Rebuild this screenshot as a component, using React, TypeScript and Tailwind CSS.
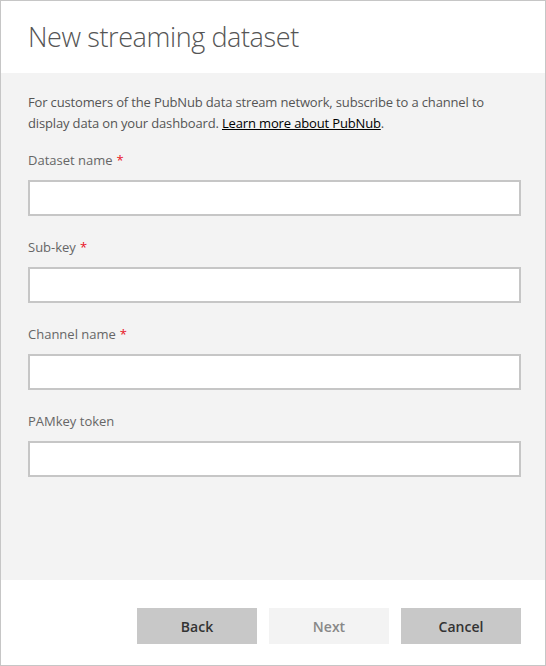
const fields = [
  { label: "Dataset name", required: true },
  { label: "Sub-key", required: true },
  { label: "Channel name", required: true },
  { label: "PAMkey token", required: false },
];

function Field({ label, required }: { label: string; required: boolean }) {
  return (
    <div className="mt-[21px] first:mt-0">
      <label className="block h-[21px] text-[13px] leading-[21px] text-[#666]">
        {label}
        {required && <span className="ml-[4px] text-[#e81123]">*</span>}
      </label>
      <input
        type="text"
        className="mt-[9px] block h-[36px] w-[493px] border-2 border-[#c6c6c6] bg-white px-2 text-[14px] outline-none"
      />
    </div>
  );
}

export default function App() {
  return (
    <div
      className="flex h-[666px] w-[546px] flex-col border border-[#c6c6c6] bg-white"
      style={{ fontFamily: '"Open Sans", "Noto Sans", sans-serif' }}
    >
      <div className="h-[72px] shrink-0 px-[27px] pt-[18px]">
        <h1 className="text-[27px] font-light leading-[36px] tracking-[-0.4px] text-[#555]">
          New streaming dataset
        </h1>
      </div>

      <div className="flex-1 bg-[#f3f3f3] px-[27px] pt-[19px]">
        <p className="w-[480px] text-[13px] leading-[21px] tracking-[-0.15px] text-[#555]">
          For customers of the PubNub data stream network, subscribe to a channel to
          display data on your dashboard.{" "}
          <a href="#" className="text-black underline">
            Learn more about PubNub
          </a>
          .
        </p>
        <div className="mt-[16px]">
          {fields.map((f) => (
            <Field key={f.label} {...f} />
          ))}
        </div>
      </div>

      <div className="flex h-[85px] shrink-0 items-start justify-end gap-[12px] pr-[24px] pt-[28px]">
        <button className="h-[36px] w-[120px] bg-[#c8c8c8] text-[14px] font-semibold text-[#333]">
          Back
        </button>
        <button className="h-[36px] w-[120px] bg-[#f3f3f3] text-[14px] font-semibold text-[#888]">
          Next
        </button>
        <button className="h-[36px] w-[120px] bg-[#c8c8c8] text-[14px] font-semibold text-[#333]">
          Cancel
        </button>
      </div>
    </div>
  );
}
